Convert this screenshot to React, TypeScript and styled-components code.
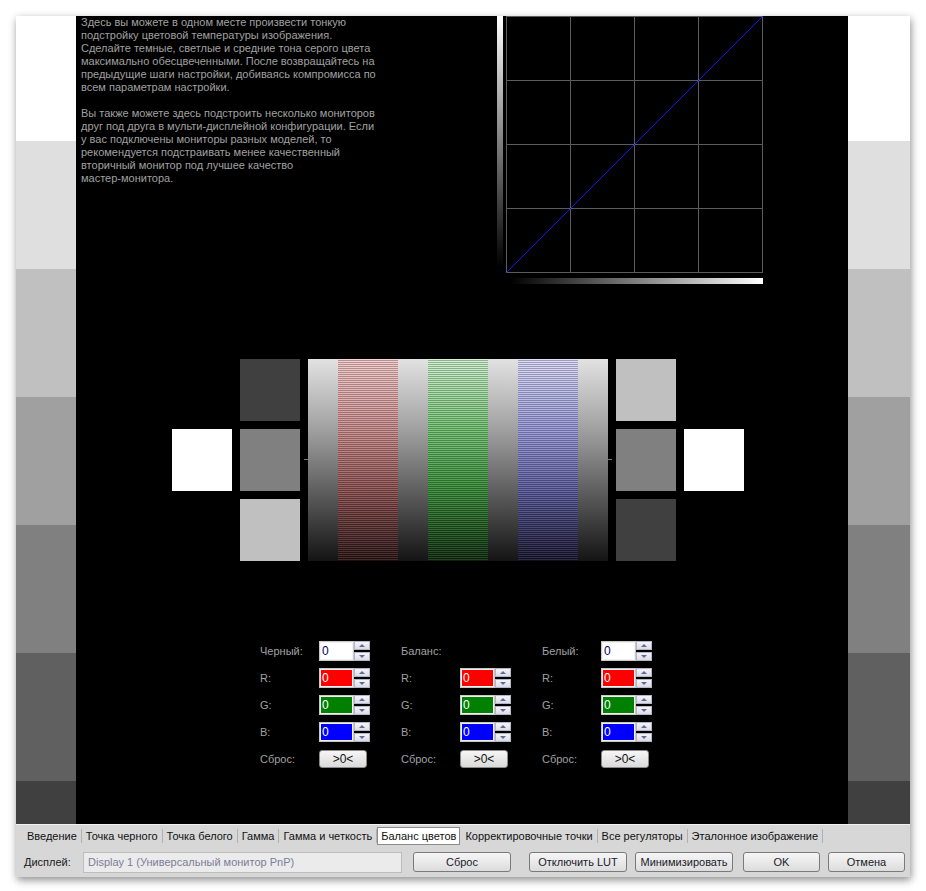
import React from "react";
import styled, { createGlobalStyle } from "styled-components";

const Global = createGlobalStyle`
  html, body { margin: 0; padding: 0; background: #ffffff; }
  body { font-family: "Liberation Sans", Arial, sans-serif; font-size: 11px; }
  * { box-sizing: border-box; }
`;

const Page = styled.div`
  width: 926px;
  height: 891px;
  padding: 16px 0 0 16px;
  overflow: hidden;
`;

const Window = styled.div`
  width: 894px;
  height: 861px;
  background: #d7d7d7;
  box-shadow: 1px 3px 8px rgba(0, 0, 0, 0.45);
  display: flex;
  flex-direction: column;
`;

const Main = styled.div`
  display: flex;
  height: 808px;
  flex: none;
`;

const Strip = styled.div<{ $w: number }>`
  width: ${(p) => p.$w}px;
  flex: none;
  display: flex;
  flex-direction: column;
  overflow: hidden;
`;

const Band = styled.div<{ $c: string; $h?: number }>`
  background: ${(p) => p.$c};
  ${(p) => (p.$h ? `height: ${p.$h}px; flex: none;` : `flex: 1;`)}
`;

const Panel = styled.div`
  width: 772px;
  flex: none;
  background: #000;
  overflow: hidden;
  display: flex;
  flex-direction: column;
`;

const TopRow = styled.div`
  display: flex;
  height: 270px;
  padding-left: 5px;
  flex: none;
`;

const Intro = styled.div`
  width: 416px;
  margin-top: 0;
  color: #a0a0a0;
  line-height: 13px;
  white-space: nowrap;
`;

const Para = styled.p`
  margin: 0 0 13px 0;
`;

const PatternRow = styled.div`
  display: flex;
  align-items: center;
  gap: 8px;
  margin-top: 73px;
  padding-left: 96px;
  height: 202px;
  flex: none;
`;

const Square = styled.div<{ $c: string }>`
  width: 60px;
  height: 62px;
  background: ${(p) => p.$c};
  flex: none;
`;

const SquareCol = styled.div`
  display: flex;
  flex-direction: column;
  gap: 8px;
`;

const Ramp = styled.div`
  position: relative;
  display: flex;
  width: 300px;
  height: 202px;
  flex: none;
  &::before,
  &::after {
    content: "";
    position: absolute;
    top: 100px;
    width: 4px;
    height: 1px;
    background: #7a7a7a;
  }
  &::before { left: -4px; }
  &::after { right: -4px; }
`;

const GrayRamp = styled.div`
  width: 30px;
  height: 100%;
  background: linear-gradient(to bottom, #e2e2e2, #a0a0a0 35%, #6a6a6a 60%, #141414);
`;

const ColorRamp = styled.div<{ $top: string; $mid: string; $low: string; $bot: string }>`
  width: 60px;
  height: 100%;
  background-image:
    repeating-linear-gradient(to bottom, rgba(255, 255, 255, 0.1) 0 1px, rgba(0, 0, 0, 0.28) 1px 2px),
    linear-gradient(to bottom, ${(p) => p.$top}, ${(p) => p.$mid} 35%, ${(p) => p.$low} 65%, ${(p) => p.$bot});
`;

const Controls = styled.div`
  display: flex;
  margin-top: 80px;
  padding-left: 184px;
  flex: none;
`;

const CtrlCol = styled.div`
  width: 141px;
  display: flex;
  flex-direction: column;
  gap: 7px;
`;

const CtrlRow = styled.div<{ $btn?: boolean }>`
  display: flex;
  align-items: center;
  height: ${(p) => (p.$btn ? 18 : 20)}px;
  ${(p) => (p.$btn ? "margin-top: 1px;" : "")}
`;

const Label = styled.span`
  width: 59px;
  flex: none;
  color: #a0a0a0;
`;

const NumBox = styled.div<{ $c: string; $fg: string }>`
  width: 35px;
  height: 20px;
  border: 2px solid #f2f2f2;
  outline: 1px solid #c8c8c8;
  outline-offset: -1px;
  background: ${(p) => p.$c};
  color: ${(p) => p.$fg};
  font-size: 12px;
  line-height: 16px;
  padding-left: 1px;
  flex: none;
`;

const Spin = styled.div`
  width: 16px;
  height: 20px;
  display: flex;
  flex-direction: column;
  justify-content: space-between;
  flex: none;
`;

const SpinBtn = styled.div`
  height: 9px;
  background: linear-gradient(to bottom, #f4f4f8, #dcdce4);
  border: 1px solid #b4b4c4;
  display: flex;
  align-items: center;
  justify-content: center;
`;

const Arrow = styled.span<{ $up?: boolean }>`
  width: 0;
  height: 0;
  border-left: 3px solid transparent;
  border-right: 3px solid transparent;
  ${(p) => (p.$up ? "border-bottom: 3px solid #5e6c9c;" : "border-top: 3px solid #5e6c9c;")}
`;

const ZeroBtn = styled.div`
  width: 48px;
  height: 18px;
  border: 1px solid #8a8a8a;
  border-radius: 3px;
  background: linear-gradient(to bottom, #f6f6f6, #dadada);
  color: #111;
  font-size: 12px;
  display: flex;
  align-items: center;
  justify-content: center;
`;

const TabBar = styled.div`
  height: 23px;
  flex: none;
  display: flex;
  align-items: center;
  padding-left: 7px;
  border-top: 1px solid #f2f2f2;
`;

const Tab = styled.div<{ $active?: boolean }>`
  padding: 0 4px;
  height: ${(p) => (p.$active ? 18 : 14)}px;
  line-height: ${(p) => (p.$active ? 16 : 14)}px;
  color: #111;
  white-space: nowrap;
  ${(p) =>
    p.$active
      ? "background: #fff; border: 1px solid #8c8c8c; padding: 0 3px; margin-right: 1px;"
      : "border-right: 1px solid #b0b0b0;"}
`;

const BottomBar = styled.div`
  height: 30px;
  flex: none;
  display: flex;
  align-items: center;
  padding-left: 8px;
`;

const BarLabel = styled.span`
  width: 59px;
  color: #1a1a1a;
  flex: none;
`;

const DisplayField = styled.div`
  width: 319px;
  height: 21px;
  background: #ebebeb;
  border: 1px solid #bdbdbd;
  color: #7c7c98;
  line-height: 19px;
  padding-left: 4px;
  flex: none;
`;

const Btn = styled.div<{ $w: number; $ml: number }>`
  width: ${(p) => p.$w}px;
  margin-left: ${(p) => p.$ml}px;
  height: 20px;
  border: 1px solid #7a7a7a;
  border-radius: 3px;
  background: linear-gradient(to bottom, #f6f6f6, #dcdcdc);
  color: #1a1a2a;
  display: flex;
  align-items: center;
  justify-content: center;
  flex: none;
`;

const bands = [
  { c: "#ffffff", h: 125 },
  { c: "#dfdfdf", h: 128 },
  { c: "#c0c0c0", h: 128 },
  { c: "#a0a0a0", h: 128 },
  { c: "#808080", h: 128 },
  { c: "#606060", h: 128 },
  { c: "#404040" },
];

const GrayStrip = ({ w }: { w: number }) => (
  <Strip $w={w}>
    {bands.map((b, i) => (
      <Band key={i} $c={b.c} $h={b.h} />
    ))}
  </Strip>
);

const Graph = () => (
  <svg width="266" height="270" viewBox="0 0 266 270" style={{ flex: "none" }}>
    <defs>
      <linearGradient id="vg" x1="0" y1="0" x2="0" y2="1">
        <stop offset="0" stopColor="#ffffff" />
        <stop offset="1" stopColor="#000000" />
      </linearGradient>
      <linearGradient id="hg" x1="0" y1="0" x2="1" y2="0">
        <stop offset="0" stopColor="#000000" />
        <stop offset="1" stopColor="#ffffff" />
      </linearGradient>
    </defs>
    <rect x="0" y="0" width="6" height="251" fill="url(#vg)" />
    <rect x="13" y="262" width="253" height="6" fill="url(#hg)" />
    <g stroke="#5c5c5c" strokeWidth="1" fill="none">
      <rect x="9.5" y="0.5" width="256" height="256" />
      <line x1="73.5" y1="0" x2="73.5" y2="257" />
      <line x1="137.5" y1="0" x2="137.5" y2="257" />
      <line x1="201.5" y1="0" x2="201.5" y2="257" />
      <line x1="9" y1="64.5" x2="266" y2="64.5" />
      <line x1="9" y1="128.5" x2="266" y2="128.5" />
      <line x1="9" y1="192.5" x2="266" y2="192.5" />
    </g>
    <line x1="9.5" y1="256.5" x2="265.5" y2="0.5" stroke="#1a1aff" strokeWidth="1" />
  </svg>
);

const SpinInput = ({ bg, fg }: { bg: string; fg: string }) => (
  <>
    <NumBox $c={bg} $fg={fg}>0</NumBox>
    <Spin>
      <SpinBtn>
        <Arrow $up />
      </SpinBtn>
      <SpinBtn>
        <Arrow />
      </SpinBtn>
    </Spin>
  </>
);

const ControlColumn = ({ title, hasTop }: { title: string; hasTop: boolean }) => (
  <CtrlCol>
    <CtrlRow>
      <Label>{title}</Label>
      {hasTop && <SpinInput bg="#ffffff" fg="#000060" />}
    </CtrlRow>
    <CtrlRow>
      <Label>R:</Label>
      <SpinInput bg="#ff0000" fg="#ffffff" />
    </CtrlRow>
    <CtrlRow>
      <Label>G:</Label>
      <SpinInput bg="#008000" fg="#ffffff" />
    </CtrlRow>
    <CtrlRow>
      <Label>B:</Label>
      <SpinInput bg="#0000ff" fg="#ffffff" />
    </CtrlRow>
    <CtrlRow $btn>
      <Label>Сброс:</Label>
      <ZeroBtn>&gt;0&lt;</ZeroBtn>
    </CtrlRow>
  </CtrlCol>
);

const tabs = [
  "Введение",
  "Точка черного",
  "Точка белого",
  "Гамма",
  "Гамма и четкость",
  "Баланс цветов",
  "Корректировочные точки",
  "Все регуляторы",
  "Эталонное изображение",
];

export default function App() {
  return (
    <Page>
      <Global />
      <Window>
        <Main>
          <GrayStrip w={60} />
          <Panel>
            <TopRow>
              <Intro>
                <Para>
                  Здесь вы можете в одном месте произвести тонкую
                  <br />
                  подстройку цветовой температуры изображения.
                  <br />
                  Сделайте темные, светлые и средние тона серого цвета
                  <br />
                  максимально обесцвеченными. После возвращайтесь на
                  <br />
                  предыдущие шаги настройки, добиваясь компромисса по
                  <br />
                  всем параметрам настройки.
                </Para>
                <Para>
                  Вы также можете здесь подстроить несколько мониторов
                  <br />
                  друг под друга в мульти-дисплейной конфигурации. Если
                  <br />
                  у вас подключены мониторы разных моделей, то
                  <br />
                  рекомендуется подстраивать менее качественный
                  <br />
                  вторичный монитор под лучшее качество
                  <br />
                  мастер-монитора.
                </Para>
              </Intro>
              <Graph />
            </TopRow>
            <PatternRow>
              <Square $c="#ffffff" />
              <SquareCol>
                <Square $c="#404040" />
                <Square $c="#808080" />
                <Square $c="#c0c0c0" />
              </SquareCol>
              <Ramp>
                <GrayRamp />
                <ColorRamp $top="#f8cccc" $mid="#cc8c8c" $low="#8e5050" $bot="#2a1212" />
                <GrayRamp />
                <ColorRamp $top="#cff4cf" $mid="#70c470" $low="#368c36" $bot="#0c2a0c" />
                <GrayRamp />
                <ColorRamp $top="#dcdcfc" $mid="#9898dc" $low="#5a5a9e" $bot="#14122c" />
                <GrayRamp />
              </Ramp>
              <SquareCol>
                <Square $c="#c0c0c0" />
                <Square $c="#808080" />
                <Square $c="#404040" />
              </SquareCol>
              <Square $c="#ffffff" />
            </PatternRow>
            <Controls>
              <ControlColumn title="Черный:" hasTop />
              <ControlColumn title="Баланс:" hasTop={false} />
              <ControlColumn title="Белый:" hasTop />
            </Controls>
          </Panel>
          <GrayStrip w={62} />
        </Main>
        <TabBar>
          {tabs.map((t) => (
            <Tab key={t} $active={t === "Баланс цветов"}>
              {t}
            </Tab>
          ))}
        </TabBar>
        <BottomBar>
          <BarLabel>Дисплей:</BarLabel>
          <DisplayField>Display 1 (Универсальный монитор PnP)</DisplayField>
          <Btn $w={98} $ml={11}>Сброс</Btn>
          <Btn $w={98} $ml={18}>Отключить LUT</Btn>
          <Btn $w={98} $ml={8}>Минимизировать</Btn>
          <Btn $w={77} $ml={10}>OK</Btn>
          <Btn $w={77} $ml={8}>Отмена</Btn>
        </BottomBar>
      </Window>
    </Page>
  );
}
